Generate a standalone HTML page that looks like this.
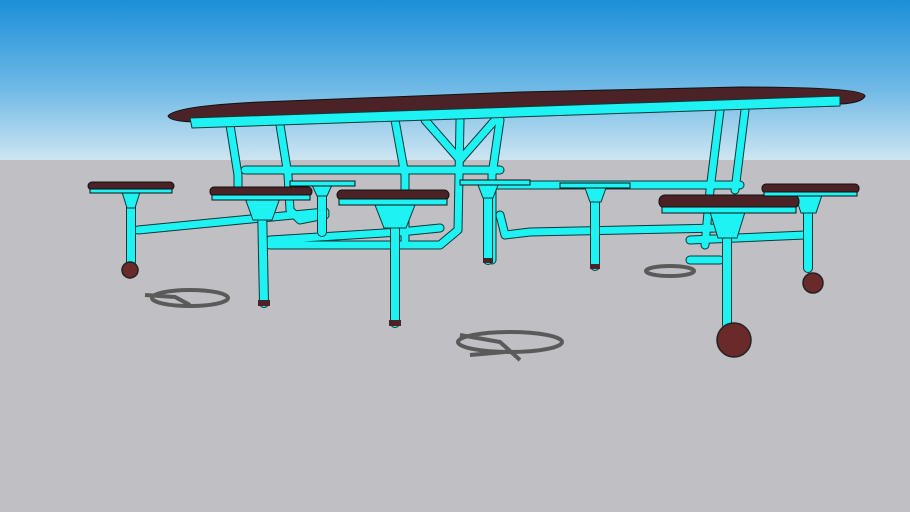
<!DOCTYPE html>
<html><head><style>body{margin:0}svg{display:block}</style></head><body>
<svg width="910" height="512" viewBox="0 0 910 512" xmlns="http://www.w3.org/2000/svg">
<defs>
<linearGradient id="sky" x1="0" y1="0" x2="0" y2="1">
<stop offset="0" stop-color="#1b8fd8"/><stop offset="0.55" stop-color="#6fb9e6"/><stop offset="1" stop-color="#cfe6f2"/>
</linearGradient>
</defs>
<rect width="910" height="161" fill="url(#sky)"/>
<rect y="160" width="910" height="352" fill="#bfbfc4"/>
<g fill="none" stroke="#5a5a5a" stroke-width="4">
<ellipse cx="510" cy="342" rx="52" ry="10"/><ellipse cx="190" cy="298" rx="38" ry="8"/>
<ellipse cx="670" cy="271" rx="24" ry="5"/><path d="M460 335 L500 342 L520 360 M470 355 L505 352"/>
<path d="M145 295 L175 297 L190 305"/>
</g>
<g fill="none" stroke-linecap="round" stroke-linejoin="round">
<g stroke="#0a3a3a" stroke-width="9">
<path d="M230 125 L238 175 L238 195"/><path d="M280 125 L288 175 L290 210 L300 220 L325 215"/>
<path d="M395 120 L405 175 L405 240"/><path d="M500 120 L492 175 L492 260"/>
<path d="M720 110 L710 190 L705 245"/><path d="M745 110 L735 190"/>
<path d="M425 120 L460 160 L495 120"/><path d="M460 120 L458 230 L440 245 L270 245"/>
<path d="M138 230 L220 222 L325 212"/><path d="M270 240 L400 232 L440 228"/>
<path d="M500 215 L505 235 L530 232 L720 228"/><path d="M245 170 L500 170"/><path d="M490 185 L740 185"/>
<path d="M690 240 L805 235"/><path d="M690 260 L720 260"/>
</g>
<g stroke="#1ef2f2" stroke-width="7">
<path d="M230 125 L238 175 L238 195"/><path d="M280 125 L288 175 L290 210 L300 220 L325 215"/>
<path d="M395 120 L405 175 L405 240"/><path d="M500 120 L492 175 L492 260"/>
<path d="M720 110 L710 190 L705 245"/><path d="M745 110 L735 190"/>
<path d="M425 120 L460 160 L495 120"/><path d="M460 120 L458 230 L440 245 L270 245"/>
<path d="M138 230 L220 222 L325 212"/><path d="M270 240 L400 232 L440 228"/>
<path d="M500 215 L505 235 L530 232 L720 228"/><path d="M245 170 L500 170"/><path d="M490 185 L740 185"/>
<path d="M690 240 L805 235"/><path d="M690 260 L720 260"/>
</g>
</g>
<path d="M168 116 Q175 106 260 102 L520 92 L740 87 Q865 87 865 96 Q862 103 840 104 L200 122 Q170 122 168 116Z" fill="#4b2226" stroke="#111" stroke-width="1"/>
<path d="M190 118 L840 96 L840 106 L192 128Z" fill="#1ef2f2" stroke="#0a3a3a" stroke-width="1"/>
<g fill="none" stroke-linecap="round">
<g stroke="#0a3a3a" stroke-width="10">
<path d="M131 200 L131 262"/><path d="M262 205 L264 303"/><path d="M395 205 L395 323"/>
<path d="M488 190 L488 260"/><path d="M595 190 L595 266"/><path d="M727 212 L727 325"/><path d="M808 205 L808 268"/><path d="M322 190 L322 232"/>
</g>
<g stroke="#1ef2f2" stroke-width="8">
<path d="M131 200 L131 262"/><path d="M262 205 L264 303"/><path d="M395 205 L395 323"/>
<path d="M488 190 L488 260"/><path d="M595 190 L595 266"/><path d="M727 212 L727 325"/><path d="M808 205 L808 268"/><path d="M322 190 L322 232"/>
</g>
</g>
<g fill="#4b2226"><rect x="258" y="300" width="12" height="6"/><rect x="389" y="320" width="12" height="6"/><rect x="483" y="258" width="10" height="5"/><rect x="590" y="264" width="10" height="5"/></g>
<g stroke="#222" stroke-width="1.5">
<circle cx="130" cy="270" r="8" fill="#6b2a2a"/><circle cx="813" cy="283" r="10" fill="#6b2a2a"/><circle cx="734" cy="340" r="17" fill="#6b2a2a"/>
</g>
<g stroke="#0a3a3a" stroke-width="1">
<path d="M122 192 L140 192 L135 208 L127 208Z" fill="#1ef2f2"/>
<path d="M245 198 L280 198 L272 220 L253 220Z" fill="#1ef2f2"/>
<path d="M375 205 L415 205 L406 228 L384 228Z" fill="#1ef2f2"/>
<path d="M710 212 L745 212 L737 238 L718 238Z" fill="#1ef2f2"/>
<path d="M795 195 L822 195 L816 213 L801 213Z" fill="#1ef2f2"/>
<path d="M312 185 L332 185 L327 196 L317 196Z" fill="#1ef2f2"/>
<path d="M478 185 L498 185 L493 198 L483 198Z" fill="#1ef2f2"/>
<path d="M585 188 L606 188 L601 202 L590 202Z" fill="#1ef2f2"/>
</g>
<g stroke="#111" stroke-width="1">
<rect x="88" y="182" width="86" height="8" rx="4" fill="#4b2226"/><rect x="90" y="189" width="82" height="4" fill="#1ef2f2"/>
<rect x="210" y="187" width="102" height="9" rx="4" fill="#4b2226"/><rect x="212" y="195" width="98" height="5" fill="#1ef2f2"/>
<rect x="337" y="190" width="112" height="10" rx="5" fill="#4b2226"/><rect x="339" y="199" width="108" height="6" fill="#1ef2f2"/>
<rect x="659" y="195" width="140" height="13" rx="6" fill="#4b2226"/><rect x="662" y="207" width="134" height="6" fill="#1ef2f2"/>
<rect x="762" y="184" width="97" height="9" rx="4" fill="#4b2226"/><rect x="764" y="192" width="93" height="4" fill="#1ef2f2"/>
<rect x="290" y="181" width="65" height="5" fill="#1ef2f2"/><rect x="460" y="180" width="70" height="5" fill="#1ef2f2"/><rect x="560" y="183" width="70" height="5" fill="#1ef2f2"/>
</g>
</svg>
</body></html>
